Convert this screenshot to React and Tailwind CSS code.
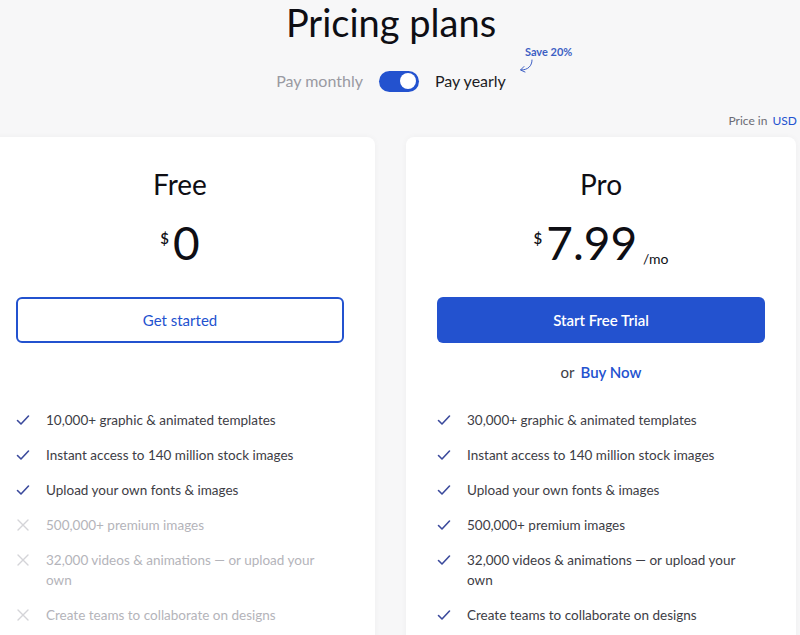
import React from 'react';

const Check = () => (
  <svg width="14" height="14" viewBox="0 0 14 14" className="shrink-0 mt-[3px]">
    <path d="M1.5 7.5l3.5 3.5L12.5 3" fill="none" stroke="#3b4a9c" strokeWidth="1.6" strokeLinecap="round" strokeLinejoin="round" />
  </svg>
);

const Cross = () => (
  <svg width="14" height="14" viewBox="0 0 14 14" className="shrink-0 mt-[3px]">
    <path d="M2 2l10 10M12 2L2 12" fill="none" stroke="#d4d4d8" strokeWidth="1.4" strokeLinecap="round" />
  </svg>
);

const FeatureList = ({ items }) => (
  <ul className="flex flex-col gap-[15px]">
    {items.map((item, i) => (
      <li key={i} className="flex gap-[16px]">
        {item.ok ? <Check /> : <Cross />}
        <span className={`max-w-[285px] text-[13.5px] leading-[20px] ${item.ok ? 'text-[#3d3d45]' : 'text-[#b4b4ba]'}`}>
          {item.text}
        </span>
      </li>
    ))}
  </ul>
);

const PlanCard = ({ name, price, perMonth, button, items }) => (
  <div className="w-[390px] shrink-0 bg-white rounded-lg shadow-[0_0_6px_rgba(0,0,0,0.04)] px-[31px] pt-[32px] pb-[40px]">
    <h2 className="text-center text-[28px] leading-[30px] text-[#0e0e14]">{name}</h2>

    {/* Price */}
    <div className="flex justify-center items-start mt-[20px] h-[52px]">
      <span className="text-[15px] font-semibold text-[#0e0e14] mt-[8px] mr-[4px]">$</span>
      <span className="text-[46px] leading-[48px] text-[#0e0e14]">{price}</span>
      {perMonth && <span className="text-[14px] text-[#0e0e14] self-end mb-[2px] ml-[6px]">/mo</span>}
    </div>

    <div className="mt-[26px] h-[113px]">{button}</div>

    <FeatureList items={items} />
  </div>
);

export default function App() {
  const freeItems = [
    { ok: true, text: '10,000+ graphic & animated templates' },
    { ok: true, text: 'Instant access to 140 million stock images' },
    { ok: true, text: 'Upload your own fonts & images' },
    { ok: false, text: '500,000+ premium images' },
    { ok: false, text: '32,000 videos & animations — or upload your own' },
    { ok: false, text: 'Create teams to collaborate on designs' },
  ];
  const proItems = [
    { ok: true, text: '30,000+ graphic & animated templates' },
    { ok: true, text: 'Instant access to 140 million stock images' },
    { ok: true, text: 'Upload your own fonts & images' },
    { ok: true, text: '500,000+ premium images' },
    { ok: true, text: '32,000 videos & animations — or upload your own' },
    { ok: true, text: 'Create teams to collaborate on designs' },
  ];

  return (
    <div className="h-[635px] overflow-hidden bg-[#f7f7f8] font-['Lato',sans-serif]">
      <h1 className="text-center text-[38px] leading-[44px] text-[#0e0e14] pr-[18px]">Pricing plans</h1>

      {/* Billing toggle */}
      <div className="flex justify-center items-center gap-[16px] mt-[25px] pr-[18px]">
        <span className="text-[16px] text-[#9a9aa2]">Pay monthly</span>
        <div className="w-[40px] h-[21px] rounded-full bg-[#2352cf] flex items-center justify-end pr-[3px]">
          <div className="w-[16px] h-[16px] rounded-full bg-white" />
        </div>
        <span className="relative text-[16px] text-[#1c1c24]">
          Pay yearly
          <span className="absolute left-[90px] top-[-25px] text-[11px] font-bold text-[#3d5fc4] whitespace-nowrap">Save 20%</span>
          <svg className="absolute left-[82px] top-[-10px]" width="20" height="20" viewBox="0 0 20 20">
            <path d="M15 1c0 6-4 10-11 10" fill="none" stroke="#3d5fc4" strokeWidth="1" strokeLinecap="round" />
            <path d="M7 7.5L3.5 11 8 13" fill="none" stroke="#3d5fc4" strokeWidth="1" strokeLinecap="round" strokeLinejoin="round" />
          </svg>
        </span>
      </div>

      <div className="text-right text-[12px] pr-[3px] mt-[19px] text-[#6b6b74]">
        Price in <span className="text-[#2352cf] ml-[2px]">USD</span>
      </div>

      {/* Plans */}
      <div className="flex gap-[31px] -ml-[15px] mt-[7px]">
        <PlanCard
          name="Free"
          price="0"
          items={freeItems}
          button={
            <button className="w-full h-[46px] rounded-md border-2 border-[#2352cf] text-[#2352cf] text-[15px] bg-white">
              Get started
            </button>
          }
        />
        <PlanCard
          name="Pro"
          price="7.99"
          perMonth
          items={proItems}
          button={
            <div>
              <button className="w-full h-[46px] rounded-md bg-[#2352cf] text-white text-[15px] font-semibold">
                Start Free Trial
              </button>
              <div className="text-center mt-[19px] text-[15px] leading-[20px]">
                <span className="text-[#3d3d45] mr-[6px]">or</span>
                <span className="text-[#2352cf] font-semibold">Buy Now</span>
              </div>
            </div>
          }
        />
      </div>
    </div>
  );
}
